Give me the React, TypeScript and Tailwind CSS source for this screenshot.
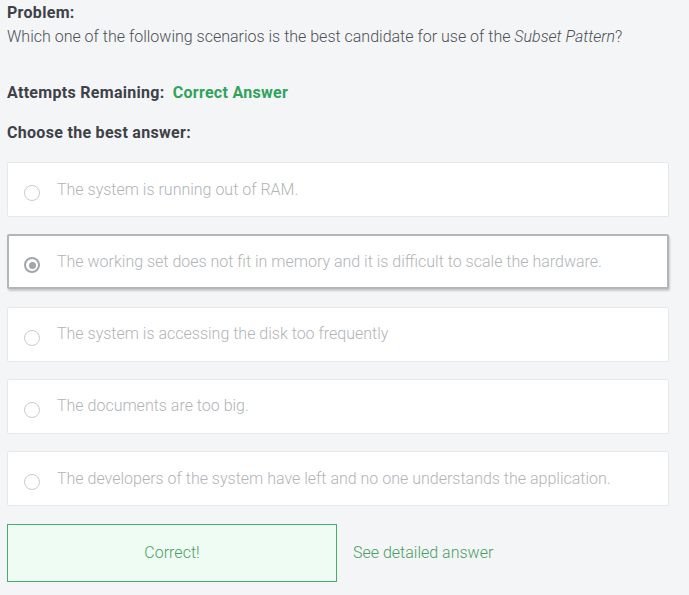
import React from "react";

const options = [
  "The system is running out of RAM.",
  "The working set does not fit in memory and it is difficult to scale the hardware.",
  "The system is accessing the disk too frequently",
  "The documents are too big.",
  "The developers of the system have left and no one understands the application.",
];

const selected = 1;

function Radio({ checked }: { checked: boolean }) {
  if (checked) {
    return (
      <span className="mt-[7px] flex h-4 w-4 shrink-0 items-center justify-center rounded-full border-2 border-[#a3a6a9]">
        <span className="h-[7px] w-[7px] rounded-full bg-[#a3a6a9]" />
      </span>
    );
  }
  return <span className="mt-[7px] h-4 w-4 shrink-0 rounded-full border border-[#c9cbcd] bg-white" />;
}

export default function App() {
  return (
    <div
      className="min-h-[595px] bg-[#f4f5f7] pl-[7px] pr-[20px] pt-px text-[16px]"
      style={{ fontFamily: "Roboto, 'Liberation Sans', sans-serif" }}
    >
      <div className="font-bold leading-6 tracking-[0.3px] text-[#3e4148]">Problem:</div>
      <p className="font-light leading-6 text-[#4d5056]">
        Which one of the following scenarios is the best candidate for use of the{" "}
        <em>Subset Pattern</em>?
      </p>

      <div className="mt-8 flex gap-[8px] leading-6 font-bold tracking-[0.3px]">
        <span className="text-[#3e4148]">Attempts Remaining:</span>
        <span className="text-[#2fa35a]">Correct Answer</span>
      </div>

      <div className="mt-4 font-bold leading-6 tracking-[0.3px] text-[#3e4148]">
        Choose the best answer:
      </div>

      <ul className="mt-[17px] flex flex-col gap-[17.3px]">
        {options.map((opt, i) => {
          const isSel = i === selected;
          return (
            <li
              key={opt}
              className={`flex h-[55px] items-center gap-[17px] rounded-[2px] bg-white ${
                isSel
                  ? "border-2 border-[#b3b6b9] pl-[15px] shadow-[1px_2px_2px_rgba(0,0,0,0.18)]"
                  : "border border-[#e6e8ea] pl-[16px]"
              }`}
            >
              <Radio checked={isSel} />
              <span className="font-light text-[#b1b4b7]">{opt}</span>
            </li>
          );
        })}
      </ul>

      <div className="mt-[18px] flex items-center gap-4">
        <div className="flex h-[58px] w-[330px] items-center justify-center border border-[#44ae6c] bg-[#effcf3] font-light text-[#4a9e64]">
          Correct!
        </div>
        <span className="font-light text-[#4a9e64]">See detailed answer</span>
      </div>
    </div>
  );
}
